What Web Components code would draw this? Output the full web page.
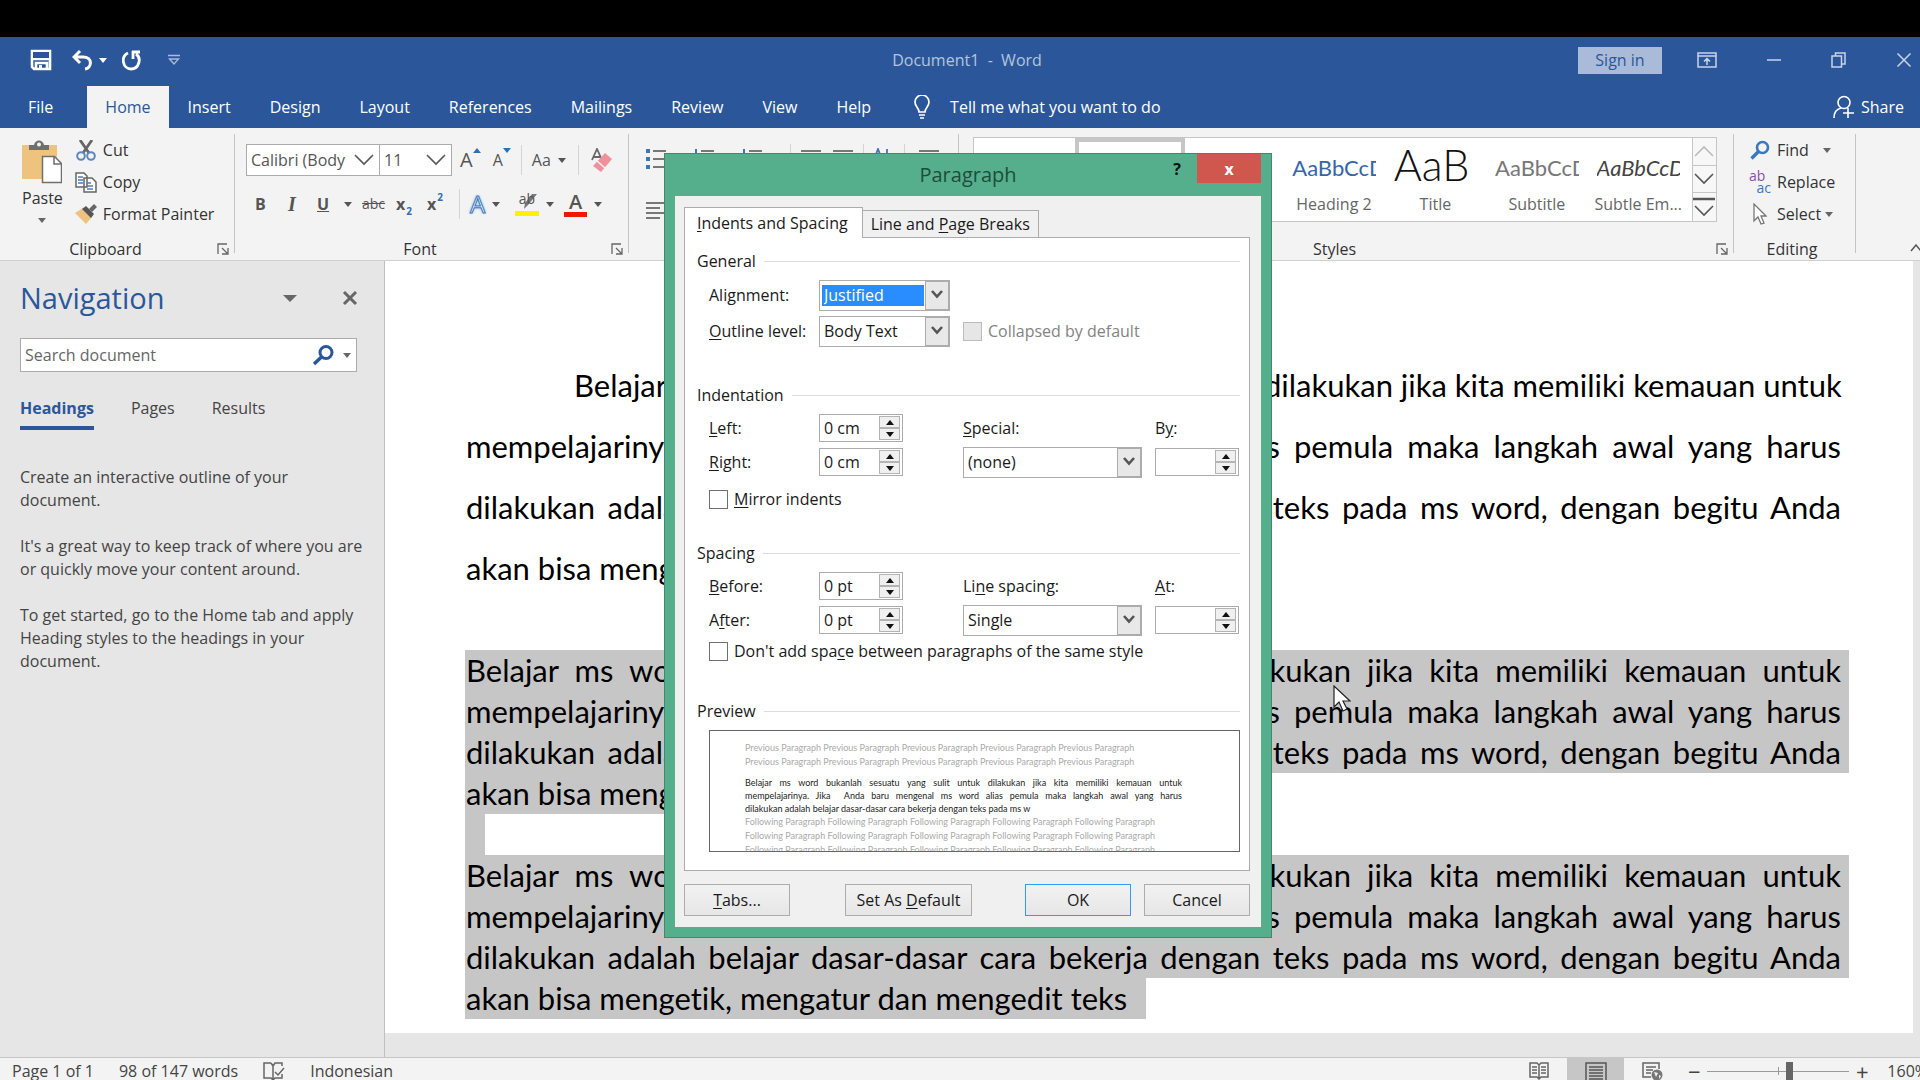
<!DOCTYPE html>
<html lang="en">
<head>
<meta charset="utf-8">
<title>Document1 - Word</title>
<style>
    html, body {
        height: 100%;
        margin: 0;
    }
    body {
        overflow: hidden;
        background: #000;
        color: #444;
        font: 16px/24px "Open Sans", "Noto Sans", sans-serif;
    }
</style>
</head>
<body>
<word-app></word-app>
<script>
const base = `
    *, :host { box-sizing: border-box; }
    button, input, select {
        margin: 0;
        padding: 0;
        border: 0;
        background: none;
        color: inherit;
        font: inherit;
        outline: none;
    }
    button { display: inline-flex; align-items: center; justify-content: center; }
`;

const icons = {
    save: [22, 22, '<path d="M2 2h18v18H4l-2-2z M6 20v-6h11v6 M2 10h18" fill="none" stroke="#fff" stroke-width="2.6"/><path d="M3 3h16v6H3z" fill="#2b579a"/><path d="M9 16h3v4H9z" fill="#fff"/>'],
    undo: [22, 22, '<path d="M8 2L2 8l6 6M3 8h8c10 0 9 11 2 12" fill="none" stroke="#fff" stroke-width="3"/>'],
    redo: [20, 22, '<path d="M6 4c-8 4-5 16 3 16s11-11 5-15M10 3h8M11 2v8" fill="none" stroke="#fff" stroke-width="2.800"/>'],
    custom: [12, 12, '<path d="M0 1.500h12M1.500 5L6 10l4.500-5z" fill="none" stroke="#a9bbd9" stroke-width="1.300"/>'],
    display: [20, 16, '<path d="M1 1h18v14H1zM1 4h18M10 13V7M7 9.500L10 6.500l3 3" fill="none" stroke="#c8d4e8" stroke-width="1.500"/>'],
    minimise: [16, 16, '<path d="M1 8h14" stroke="#c8d4e8" stroke-width="1.500"/>'],
    restore: [16, 16, '<path d="M1 4h9.500v11H1zM4.500 4V1H14v11h-3" fill="none" stroke="#c8d4e8" stroke-width="1.500"/>'],
    closewin: [16, 16, '<path d="M1.500 1.500l13 13M14.500 1.500l-13 13" stroke="#c8d4e8" stroke-width="1.500"/>'],
    bulb: [18, 24, '<path d="M6 17c0-4-4-5-4-10a7 7 0 0 1 14 0c0 5-4 6-4 10zM6 20h6M7 23h4" fill="none" stroke="#fff" stroke-width="1.700"/>'],
    share: [22, 24, '<circle cx="11" cy="7.500" r="6" fill="none" stroke="#fff" stroke-width="1.600"/><path d="M1 23c0-6 3-9 7-10M15 13v10M10 18h11" fill="none" stroke="#fff" stroke-width="1.600"/>'],
    paste: [40, 44, '<path d="M0 5h35v34H0z" fill="#eec37f"/><path d="M7 5h5c1-6 9-6 10 0h5v5H7z" fill="#6f6f6f"/><circle cx="17" cy="4.500" r="2" fill="#f3f3f3"/><path d="M20.500 16.500h12l7 7v19h-19z" fill="#fff" stroke="#6f6f6f" stroke-width="1.500"/><path d="M32 17v7h7" fill="none" stroke="#6f6f6f" stroke-width="1.500"/>'],
    cut: [20, 21, '<path d="M4 0l9 13M16 0L7 13" stroke="#666" stroke-width="2.800"/><circle cx="5" cy="16" r="3.800" fill="none" stroke="#5c86bd" stroke-width="2"/><circle cx="15" cy="16" r="3.800" fill="none" stroke="#5c86bd" stroke-width="2"/>'],
    copy: [22, 21, '<path d="M1 1h8l3 3v11H1zM9 6h8l4 4v10H9z" fill="#fff" stroke="#666" stroke-width="1.500"/><path d="M3 5h5M3 8h5M3 11h5M12 11h4M12 14h6M12 17h6" stroke="#4a7ebb" stroke-width="1.300"/>'],
    painter: [22, 20, '<path d="M8 4l9 9-6 7-11-11z" fill="#eec37f"/><path d="M7 5l4-3 8 8-3 4z" fill="#555"/><path d="M14 5l5-5 3 3-5 5z" fill="#666"/>'],
    launcher: [12, 12, '<path d="M1 11V1h9M5 5l6 6M11 5v6H5" fill="none" stroke="#666" stroke-width="1.300"/>'],
    caret: [8, 5, '<path d="M0 0h8L4 5z" fill="currentColor"/>'],
    bigcaret: [14, 7, '<path d="M0 0h14L7 7z" fill="#666"/>'],
    chevron: [20, 12, '<path d="M1 1l9 9 9-9" fill="none" stroke="#555" stroke-width="1.600"/>'],
    chevronup: [20, 12, '<path d="M1 11l9-9 9 9" fill="none" stroke="#bbb" stroke-width="1.600"/>'],
    chevronmore: [22, 20, '<path d="M0 2h22" stroke="#555" stroke-width="2.500"/><path d="M2 9l9 9 9-9" fill="none" stroke="#555" stroke-width="1.600"/>'],
    collapse: [12, 8, '<path d="M1 7l5-6 5 6" fill="none" stroke="#555" stroke-width="1.500"/>'],
    up: [8, 5, '<path d="M0 5h8L4 0z" fill="#2f6fb5"/>'],
    down: [8, 5, '<path d="M0 0h8L4 5z" fill="#2f6fb5"/>'],
    eraser: [22, 24, '<path d="M1 12L6 1l5 11M3 9h6" fill="none" stroke="#666" stroke-width="1.800"/><path d="M14 5l7 6-11 13-8-6z" fill="#f0909c"/><path d="M6 13l8 7" stroke="#f3f3f3" stroke-width="1.500"/>'],
    marker: [24, 24, '<path d="M0 19h24v5H0z" fill="#fff000"/><path d="M22 2L13 13l-4 4 1-6 7-9z" fill="#777"/>'],
    bullets: [20, 22, '<path d="M7 3h13M7 11h13M7 19h13" stroke="#777" stroke-width="2"/><path d="M0 1h4v4H0zM0 9h4v4H0zM0 17h4v4H0z" fill="#3b76b8"/>'],
    numbers: [20, 22, '<path d="M7 3h13M7 11h13M7 19h13" stroke="#777" stroke-width="2"/><path d="M2 1v5M2 9v5" stroke="#3b76b8" stroke-width="2"/>'],
    lines: [20, 22, '<path d="M0 3h20M0 8h14M0 13h20M0 18h14" stroke="#777" stroke-width="1.800"/>'],
    sort: [16, 22, '<path d="M1 9l3-8 3 8M13 1v19" fill="none" stroke="#3b76b8" stroke-width="1.800"/>'],
    find: [20, 20, '<circle cx="12.500" cy="7.500" r="5.500" fill="none" stroke="#3a78bd" stroke-width="2.600"/><path d="M8.500 11.500L1.500 18.500" stroke="#3a78bd" stroke-width="3.400"/>'],
    pointer: [14, 22, '<path d="M1 1v17l4-4 3 7 3-1-3-7h5z" fill="#fff" stroke="#777" stroke-width="1.300"/>'],
    cursor: [18, 28, '<path d="M1 1v21l5-5 4 9 4-2-4-8h7z" fill="#fff" stroke="#222" stroke-width="1.200"/>'],
    cross: [16, 16, '<path d="M2 2l12 12M14 2L2 14" stroke="#666" stroke-width="3"/>'],
    search: [22, 20, '<circle cx="14" cy="7.500" r="6" fill="none" stroke="#2b579a" stroke-width="3"/><path d="M9.500 12L2 19" stroke="#2b579a" stroke-width="3.500"/>'],
    dropdown: [12, 10, '<path d="M1 1l5 5.500L11 1" fill="none" stroke="#555" stroke-width="2.600"/>'],
    spinup: [8, 5, '<path d="M0 5h8L4 0z" fill="#111"/>'],
    spindown: [8, 5, '<path d="M0 0h8L4 5z" fill="#111"/>'],
    proof: [22, 19, '<path d="M8 1H1v15h7l2 2 2-2h7v-4M10 4v13M10 4L8 1M10 4l2-3h7v3M12 10l3 3 6-7" fill="none" stroke="#666" stroke-width="1.500"/>'],
    read: [20, 19, '<path d="M1 1h7l2 2 2-2h7v14h-7l-2 2-2-2H1zM10 3v16" fill="none" stroke="#666" stroke-width="1.500"/><path d="M3 5h5M3 8h5M3 11h5M12 5h5M12 8h5M12 11h5" stroke="#666" stroke-width="1.300"/>'],
    print: [22, 19, '<path d="M1 1h20v18H1z" fill="none" stroke="#555" stroke-width="1.500"/><path d="M4 5h14M4 8h14M4 11h14M4 14h14M4 17h14" stroke="#555" stroke-width="1.300"/>'],
    web: [22, 19, '<path d="M9 15H1V1h16v6" fill="none" stroke="#666" stroke-width="1.500"/><path d="M4 5h10M4 8h7M4 11h5" stroke="#666" stroke-width="1.300"/><circle cx="15" cy="13" r="5.500" fill="#777"/><path d="M12 10l4 1-2 4zM17 13l2 1-2 3z" fill="#f3f3f3"/>'],
};

window.customElements.define('word-icon', class WordIcon extends HTMLElement {
    constructor() {
        super();
        this.attachShadow({ mode: 'open' });
    }
    connectedCallback() {
        const [w, h, body] = icons[this.getAttribute('name')];
        this.shadowRoot.innerHTML = `
            <style>:host { display: inline-flex; flex: none; } svg { display: block; }</style>
            <svg width="${w}" height="${h}" viewBox="0 0 ${w} ${h}" aria-hidden="true">${body}</svg>
        `;
    }
});

window.customElements.define('title-bar', class TitleBar extends HTMLElement {
    static #style = `
        ${base}
        :host {
            display: grid;
            grid-template-columns: 1fr auto 1fr;
            align-items: center;
            height: 46px;
            padding-left: 14px;
            background: #2b579a;
            color: #b4c4df;
        }
        .quick, .window { display: flex; align-items: center; }
        .quick { padding-left: 16px; color: #fff; }
        .undo { gap: 5px; margin: 0 15px 0 20px; }
        .custom { margin-left: 26px; }
        .window { justify-content: flex-end; gap: 49px; padding-right: 8px; }
        .sign { width: 84px; height: 27px; margin-right: -14px; background: #a9bbd9; color: #2b579a; }
        h1 { margin: 0; font-size: 16px; font-weight: 400; white-space: pre; }
    `
    constructor() {
        super();
        this.attachShadow({ mode: 'open' });
        this.shadowRoot.innerHTML = `
            <style>${TitleBar.#style}</style>
            <div class="quick">
                <button aria-label="Save"><word-icon name="save"></word-icon></button>
                <button class="undo" aria-label="Undo"><word-icon name="undo"></word-icon><word-icon name="caret"></word-icon></button>
                <button aria-label="Repeat"><word-icon name="redo"></word-icon></button>
                <button class="custom" aria-label="Customize"><word-icon name="custom"></word-icon></button>
            </div>
            <h1>Document1  -  Word</h1>
            <div class="window">
                <button class="sign">Sign in</button>
                <button aria-label="Ribbon options"><word-icon name="display"></word-icon></button>
                <button aria-label="Minimize"><word-icon name="minimise"></word-icon></button>
                <button aria-label="Restore"><word-icon name="restore"></word-icon></button>
                <button aria-label="Close"><word-icon name="closewin"></word-icon></button>
            </div>
        `;
    }
});

window.customElements.define('tab-bar', class TabBar extends HTMLElement {
    static #style = `
        ${base}
        :host {
            display: flex;
            height: 45px;
            padding-top: 3px;
            background: #2b579a;
            color: #fff;
        }
        button { padding: 0 20px 0 19px; }
        .file { padding: 0 34px 0 28px; }
        .active { padding: 0 18px; background: #f3f3f3; color: #2b579a; }
        .tell { gap: 19px; padding-left: 22px; }
        .share { gap: 6px; margin-left: auto; padding-right: 16px; }
    `
    static #tabs = ['Insert', 'Design', 'Layout', 'References', 'Mailings', 'Review', 'View', 'Help']
    constructor() {
        super();
        this.attachShadow({ mode: 'open' });
        this.shadowRoot.innerHTML = `
            <style>${TabBar.#style}</style>
            <button class="file">File</button>
            <button class="active">Home</button>
            ${TabBar.#tabs.map((tab) => `<button>${tab}</button>`).join('')}
            <button class="tell"><word-icon name="bulb"></word-icon>Tell me what you want to do</button>
            <button class="share"><word-icon name="share"></word-icon>Share</button>
        `;
    }
});

window.customElements.define('ribbon-group', class RibbonGroup extends HTMLElement {
    static #style = `
        ${base}
        :host {
            display: flex;
            flex-direction: column;
            flex: none;
            height: 119px;
            border-right: 1px solid #c4c4c4;
        }
        .body { flex: 1; min-height: 0; }
        footer { display: flex; align-items: center; height: 24px; margin-bottom: -8px; padding-right: 5px; }
        span { flex: 1; padding-right: 6px; text-align: center; }
        :host([label=Editing]) span { padding-right: 0; }
    `
    constructor() {
        super();
        const label = this.getAttribute('label');
        const launcher = this.hasAttribute('launcher')
            ? `<button aria-label="${label} settings"><word-icon name="launcher"></word-icon></button>`
            : '';
        this.attachShadow({ mode: 'open' });
        this.shadowRoot.innerHTML = `
            <style>${RibbonGroup.#style}</style>
            <div class="body"><slot></slot></div>
            <footer><span>${label}</span>${launcher}</footer>
        `;
    }
});

window.customElements.define('style-item', class StyleItem extends HTMLElement {
    static #style = `
        ${base}
        :host { display: flex; flex: 1; min-width: 0; }
        :host([selected]) { border: 4px solid #c6c6c6; }
        button { flex: 1; min-width: 0; flex-direction: column; padding: 0 12px 0 6px; }
        b {
            width: 100%;
            height: 48px;
            overflow: hidden;
            color: var(--sample, #444);
            font: 400 var(--sample-size, 22px)/48px Lato, sans-serif;
            text-align: left;
            white-space: nowrap;
        }
        :host([italic]) b { font-style: italic; }
        :host([light]) b { font-weight: 300; line-height: 42px; }
        span { white-space: nowrap; color: #666; }
    `
    constructor() {
        super();
        this.attachShadow({ mode: 'open' });
        this.shadowRoot.innerHTML = `
            <style>${StyleItem.#style}</style>
            <button><b>${this.getAttribute('sample') || ''}</b><span><slot></slot></span></button>
        `;
    }
});

window.customElements.define('ribbon-bar', class RibbonBar extends HTMLElement {
    static #style = `
        ${base}
        :host {
            display: flex;
            height: 133px;
            padding-top: 6px;
            border-bottom: 1px solid #d0d0d0;
            background: #f3f3f3;
            color: #333;
        }
        .row { display: flex; align-items: center; }
        .col { display: flex; flex-direction: column; }
        .clipboard { width: 235px; }
        .font { width: 394px; }
        .paragraph { width: 330px; }
        .styles { flex: 1; }
        .editing { width: 122px; }
        .clip { gap: 12px; align-items: flex-start; padding: 0 0 0 22px; }
        .paste { flex-direction: column; gap: 2px; padding-top: 6px; }
        .paste word-icon[name=caret] { margin-top: 6px; color: #666; }
        .actions { align-items: flex-start; }
        .actions button { gap: 6px; height: 32px; }
        .actions word-icon { width: 22px; justify-content: center; }
        .fontrows { gap: 12px; padding: 10px 0 0 11px; }
        .fontrows .row { height: 32px; color: #555; }
        .combo { display: flex; align-items: center; height: 32px; border: 1px solid #ababab; background: #fff; padding: 0 5px 0 4px; }
        .combo select { appearance: none; flex: 1; min-width: 0; }
        .family { width: 134px; }
        .size { width: 73px; margin-left: -1px; }
        .sep { width: 1px; height: 30px; background: #d4d4d4; }
        .letter { align-items: flex-start; }
        .grow { margin-left: 8px; font-size: 20px; }
        .shrink { margin-left: 12px; }
        .case { gap: 7px; }
        .fontrows .tools { display: grid; grid-template-columns: 33px 29px 27px 18px 34px 31px 32px 11px 45px 49px 40px; padding-left: 9px; }
        .tools button { justify-content: flex-start; gap: 7px; white-space: nowrap; color: #555; }
        .serif { font-family: "Liberation Serif", serif; font-size: 20px; font-style: italic; font-weight: 700; }
        .strike { font-size: 14px; }
        sub, sup { font-size: 10px; line-height: 10px; color: #2f6fb5; }
        sub { align-self: flex-end; }
        sup { align-self: flex-start; }
        .tools .tight { gap: 1px; font-weight: 700; }
        .effect { font-size: 24px; color: #fff; -webkit-text-stroke: 1px #3b76b8; text-shadow: 0 0 3px #5b9bd5; }
        .mark { display: grid; }
        .mark > * { grid-area: 1 / 1; }
        .mark span { font-size: 14px; line-height: 14px; }
        .colour { border-bottom: 5px solid #f21800; padding: 0 5px; font-size: 20px; line-height: 20px; font-weight: 600; }
        .para { padding: 10px 0 0 17px; gap: 26px; }
        .para .row { gap: 28px; }
        .para .row .near { gap: 12px; margin-left: -18px; }
        .para .row .end { gap: 14px; margin-left: -18px; }
        .gallery { display: flex; height: 85px; margin: 3px 16px 0 14px; border: 1px solid #c6c6c6; background: #fff; }
        .gallery .scroll { width: 24px; border-left: 1px solid #c6c6c6; }
        .scroll button { height: 28px; border-bottom: 1px solid #c6c6c6; background: #f7f7f7; }
        .scroll button:last-child { border-bottom: 0; }
        .edits { padding-left: 15px; align-items: flex-start; }
        .edits button { gap: 6px; height: 32px; }
        .edits button > word-icon:first-child { width: 22px; justify-content: center; }
        .edits button .caret { color: #666; margin-left: 8px; }
        .edits button .close { color: #666; margin-left: -2px; }
        .swap { display: grid; width: 22px; font-size: 14px; line-height: 12px; color: #8a4fa8; text-align: left; }
        .swap i { font-style: normal; color: #3a78bd; text-align: right; }
        .collapse { align-self: flex-end; margin: 0 -2px 8px auto; }
        .rest { display: flex; width: 64px; }
    `
    constructor() {
        super();
        this.attachShadow({ mode: 'open' });
        this.shadowRoot.innerHTML = `
            <style>${RibbonBar.#style}</style>
            <ribbon-group class="clipboard" label="Clipboard" launcher>
                <div class="row clip">
                    <button class="paste"><word-icon name="paste"></word-icon>Paste<word-icon name="caret"></word-icon></button>
                    <div class="col actions">
                        <button><word-icon name="cut"></word-icon>Cut</button>
                        <button><word-icon name="copy"></word-icon>Copy</button>
                        <button><word-icon name="painter"></word-icon>Format Painter</button>
                    </div>
                </div>
            </ribbon-group>
            <ribbon-group class="font" label="Font" launcher>
                <div class="col fontrows">
                    <div class="row">
                        <label class="combo family"><select aria-label="Font"><option>Calibri (Body</option></select><word-icon name="chevron"></word-icon></label>
                        <label class="combo size"><select aria-label="Font size"><option>11</option></select><word-icon name="chevron"></word-icon></label>
                        <button class="letter grow">A<word-icon name="up"></word-icon></button>
                        <button class="letter shrink">A<word-icon name="down"></word-icon></button>
                        <i class="sep" style="margin: 0 10px"></i>
                        <button class="case">Aa<word-icon name="caret"></word-icon></button>
                        <i class="sep" style="margin: 0 12px"></i>
                        <button aria-label="Clear formatting"><word-icon name="eraser"></word-icon></button>
                    </div>
                    <div class="row tools">
                        <button><b>B</b></button>
                        <button class="serif">I</button>
                        <button><b><u>U</u></b></button>
                        <button aria-label="Underline style"><word-icon name="caret"></word-icon></button>
                        <button class="strike"><s>abc</s></button>
                        <button class="tight">x<sub>2</sub></button>
                        <button class="tight">x<sup>2</sup></button>
                        <i class="sep"></i>
                        <button><span class="effect">A</span><word-icon name="caret"></word-icon></button>
                        <button><span class="mark"><word-icon name="marker"></word-icon><span>ab</span></span><word-icon name="caret"></word-icon></button>
                        <button><span class="colour">A</span><word-icon name="caret"></word-icon></button>
                    </div>
                </div>
            </ribbon-group>
            <ribbon-group class="paragraph" label="">
                <div class="col para">
                    <div class="row">
                        <word-icon name="bullets"></word-icon>
                        <word-icon name="numbers"></word-icon>
                        <word-icon name="numbers"></word-icon>
                        <i class="sep"></i>
                        <div class="row near"><word-icon name="lines"></word-icon><word-icon name="lines"></word-icon></div>
                        <i class="sep" style="margin-left: -18px"></i>
                        <div class="row end"><word-icon name="sort"></word-icon><i class="sep"></i><word-icon name="lines"></word-icon></div>
                    </div>
                    <word-icon name="lines"></word-icon>
                </div>
            </ribbon-group>
            <ribbon-group class="styles" label="Styles" launcher>
                <div class="gallery">
                    <style-item></style-item>
                    <style-item selected></style-item>
                    <style-item></style-item>
                    <style-item sample="AaBbCcD" style="--sample: #3566a8">Heading 2</style-item>
                    <style-item sample="AaB" light style="--sample: #111; --sample-size: 43px">Title</style-item>
                    <style-item sample="AaBbCcD" style="--sample: #777">Subtitle</style-item>
                    <style-item sample="AaBbCcDc" italic>Subtle Em...</style-item>
                    <div class="col scroll">
                        <button aria-label="Previous row"><word-icon name="chevronup"></word-icon></button>
                        <button aria-label="Next row"><word-icon name="chevron"></word-icon></button>
                        <button aria-label="More styles"><word-icon name="chevronmore"></word-icon></button>
                    </div>
                </div>
            </ribbon-group>
            <ribbon-group class="editing" label="Editing">
                <div class="col edits">
                    <button><word-icon name="find"></word-icon>Find<word-icon class="caret" name="caret"></word-icon></button>
                    <button><span class="swap">ab<i>ac</i></span>Replace</button>
                    <button><word-icon name="pointer"></word-icon>Select<word-icon class="close" name="caret"></word-icon></button>
                </div>
            </ribbon-group>
            <div class="rest"><button class="collapse" aria-label="Collapse the ribbon"><word-icon name="collapse"></word-icon></button></div>
        `;
    }
});

window.customElements.define('nav-pane', class NavPane extends HTMLElement {
    static #style = `
        ${base}
        :host {
            display: block;
            flex: none;
            width: 385px;
            padding: 15px 20px 0;
            border-right: 1px solid #c0c0c0;
            background: #e6e6e6;
            line-height: 23px;
        }
        header { display: flex; align-items: center; padding-right: 6px; }
        h2 { flex: 1; margin: 0; color: #2b579a; font-size: 29px; font-weight: 400; line-height: 44px; }
        header button + button { margin-left: 45px; }
        form { display: flex; align-items: center; height: 34px; margin: 18px 7px 0 0; padding: 0 5px 0 4px; border: 1px solid #ababab; background: #fff; }
        input { flex: 1; min-width: 0; }
        input::placeholder { color: #666; opacity: 1; }
        form button + button { margin-left: 9px; color: #666; }
        nav { display: flex; gap: 37px; margin-top: 18px; }
        nav button { height: 40px; border-bottom: 4px solid transparent; }
        nav .active { border-color: #2b579a; color: #2b579a; font-weight: 700; }
        .help { margin-top: 36px; margin-right: -18px; }
        p { margin: 0 0 23px; }
    `
    constructor() {
        super();
        this.attachShadow({ mode: 'open' });
        this.shadowRoot.innerHTML = `
            <style>${NavPane.#style}</style>
            <header>
                <h2>Navigation</h2>
                <button aria-label="Pane options"><word-icon name="bigcaret"></word-icon></button>
                <button aria-label="Close pane"><word-icon name="cross"></word-icon></button>
            </header>
            <form>
                <input type="text" placeholder="Search document" aria-label="Search document">
                <button type="button" aria-label="Search"><word-icon name="search"></word-icon></button>
                <button type="button" aria-label="Search options"><word-icon name="caret"></word-icon></button>
            </form>
            <nav>
                <button class="active">Headings</button>
                <button>Pages</button>
                <button>Results</button>
            </nav>
            <div class="help">
                <p>Create an interactive outline of your<br>document.</p>
                <p>It's a great way to keep track of where you are<br>or quickly move your content around.</p>
                <p>To get started, go to the Home tab and apply<br>Heading styles to the headings in your<br>document.</p>
            </div>
        `;
    }
});

window.customElements.define('doc-page', class DocPage extends HTMLElement {
    static #style = `
        ${base}
        :host {
            display: block;
            flex: 1;
            min-width: 0;
            padding: 0 7px 24px 0;
            background: #e6e6e6;
        }
        .page {
            height: 100%;
            padding: 94px 64px 0 80px;
            background: #fff;
            color: #000;
            font: 31px/41px Lato, "Open Sans", sans-serif;
            font-variant-ligatures: none;
        }
        p { margin: 0; }
        .first { margin-bottom: 51px; padding: 0 8px 0 1px; line-height: 61px; }
        .line { display: block; text-align: justify; text-align-last: justify; white-space: nowrap; }
        .indent { padding-left: 108px; }
        .end { text-align-last: left; }
        .picked .line { padding: 0 8px 0 1px; background: #c6c6c6; }
        .picked .end { width: fit-content; padding-right: 19px; }
        .mark { width: 20px; height: 41px; background: #c6c6c6; }
    `
    static #lines = [
        'Belajar ms word bukanlah sesuatu yang sulit untuk dilakukan jika kita memiliki kemauan untuk',
        'mempelajarinya. Jika &nbsp;Anda baru mengenal ms word alias pemula maka langkah awal yang harus',
        'dilakukan adalah belajar dasar-dasar cara bekerja dengan teks pada ms word, dengan begitu Anda',
        'akan bisa mengetik, mengatur dan mengedit teks',
    ]
    static #paragraph(kind) {
        const names = [kind === 'first' ? 'line indent' : 'line', 'line', 'line', 'line end'];
        return `<p class="${kind}">${DocPage.#lines.map((line, i) => `<span class="${names[i]}">${line}</span>`).join('')}</p>`;
    }
    constructor() {
        super();
        this.attachShadow({ mode: 'open' });
        this.shadowRoot.innerHTML = `
            <style>${DocPage.#style}</style>
            <article class="page">
                ${DocPage.#paragraph('first')}
                ${DocPage.#paragraph('picked')}
                <div class="mark"></div>
                ${DocPage.#paragraph('picked')}
            </article>
        `;
    }
});

window.customElements.define('status-bar', class StatusBar extends HTMLElement {
    static #style = `
        ${base}
        :host {
            display: flex;
            align-items: center;
            height: 23px;
            overflow: hidden;
            padding: 4px 0 0 12px;
            border-top: 1px solid #c6c6c6;
            background: #f3f3f3;
            line-height: 24px;
            white-space: nowrap;
        }
        .left, .right { display: flex; align-items: center; }
        .left { gap: 25px; }
        .right { margin-left: auto; margin-right: -8px; }
        .view { width: 57px; height: 28px; }
        .on { background: #c6c6c6; }
        .step { width: 14px; font-size: 22px; }
        .view + .step { margin-left: 6px; }
        input { appearance: none; width: 142px; height: 16px; margin: 0 6px; background: linear-gradient(#999, #999) center / 100% 1px no-repeat, linear-gradient(#999, #999) center / 1px 8px no-repeat; }
        input::-webkit-slider-thumb { appearance: none; width: 7px; height: 18px; background: #666; }
        .zoom { margin-left: 18px; }
    `
    constructor() {
        super();
        this.attachShadow({ mode: 'open' });
        this.shadowRoot.innerHTML = `
            <style>${StatusBar.#style}</style>
            <div class="left">
                <span>Page 1 of 1</span>
                <span>98 of 147 words</span>
                <word-icon name="proof"></word-icon>
                <span>Indonesian</span>
            </div>
            <div class="right">
                <button class="view" aria-label="Read mode"><word-icon name="read"></word-icon></button>
                <button class="view on" aria-label="Print layout"><word-icon name="print"></word-icon></button>
                <button class="view" aria-label="Web layout"><word-icon name="web"></word-icon></button>
                <button class="step" aria-label="Zoom out">−</button>
                <input type="range" value="58" aria-label="Zoom">
                <button class="step" aria-label="Zoom in">+</button>
                <span class="zoom">160%</span>
            </div>
        `;
    }
});

window.customElements.define('dialog-section', class DialogSection extends HTMLElement {
    static #style = `
        ${base}
        :host { display: block; }
        h3 { display: flex; align-items: center; gap: 8px; height: 24px; margin: 0 0 4px; font-size: 16px; font-weight: 400; }
        h3:after { content: ""; flex: 1; height: 1px; background: #dcdcdc; }
        .grid { display: grid; grid-template-columns: 110px 144px 192px 1fr; grid-auto-rows: var(--row, 34px); align-items: center; padding-left: 12px; }
    `
    constructor() {
        super();
        this.attachShadow({ mode: 'open' });
        this.shadowRoot.innerHTML = `
            <style>${DialogSection.#style}</style>
            <h3>${this.getAttribute('heading')}</h3>
            <div class="grid"><slot></slot></div>
            <slot name="extra"></slot>
        `;
    }
});

window.customElements.define('check-field', class CheckField extends HTMLElement {
    static #style = `
        ${base}
        :host { display: block; }
        :host([disabled]) { color: #838383; }
        label { display: flex; align-items: center; gap: 6px; height: 24px; white-space: nowrap; }
        input { appearance: none; width: 19px; height: 19px; border: 1px solid #707070; background: #fff; }
        input:disabled { border-color: #bcbcbc; background: #e6e6e6; }
    `
    constructor() {
        super();
        this.attachShadow({ mode: 'open' });
        this.shadowRoot.innerHTML = `
            <style>${CheckField.#style}</style>
            <label><input type="checkbox" ${this.hasAttribute('disabled') ? 'disabled' : ''}><span><slot></slot></span></label>
        `;
    }
});

window.customElements.define('paragraph-dialog', class ParagraphDialog extends HTMLElement {
    static #style = `
        ${base}
        :host {
            position: absolute;
            left: 664px;
            top: 153px;
            width: 608px;
            padding: 0 10px 10px;
            border: 1px solid #3f8a6c;
            background: #55af8c;
            color: #1a1a1a;
            line-height: 20px;
        }
        header { display: grid; grid-template-columns: 1fr auto 1fr; height: 42px; }
        h2 { margin: 0; color: #1d4d3a; font-size: 20px; font-weight: 400; line-height: 42px; }
        .controls { display: flex; justify-content: flex-end; align-items: flex-start; }
        .controls button { width: 40px; height: 29px; color: #111; font-weight: 700; }
        .controls .close { width: 64px; background: #d0574e; color: #fff; }
        .body { padding: 11px 11px 11px 9px; background: #f0f0f0; }
        .tabs { display: flex; align-items: flex-end; height: 30px; }
        .tabs button { height: 27px; padding: 0 8px; border: 1px solid #acacac; border-left: 0; border-bottom: 0; background: #f0f0f0; white-space: nowrap; }
        .tabs .active { position: relative; height: 31px; margin-bottom: -1px; padding: 0 14px 0 12px; border-left: 1px solid #acacac; background: #fff; }
        .panel { padding: 11px 9px 18px 12px; border: 1px solid #acacac; background: #fff; }
        u { text-underline-offset: 2px; }
        .select, .spin { display: flex; border: 1px solid #acacac; background: #fff; }
        .select { width: 131px; height: 31px; }
        .wide { width: 179px; }
        .select select { appearance: none; flex: 1; min-width: 0; height: 21px; margin: 4px 1px 0 2px; padding-left: 2px; color: #1a1a1a; }
        .select .focus { background: #2a8dff; color: #fff; }
        .drop { display: flex; width: 24px; align-items: center; justify-content: center; border: 1px solid #acacac; background: #e8e8e8; }
        .spin { width: 84px; height: 28px; }
        .spin input { flex: 1; min-width: 0; padding-left: 4px; }
        .arrows { display: flex; flex-direction: column; width: 21px; margin: 1px 2px; }
        .arrows button { flex: 1; border: 1px solid #b4b4b4; background: #f0f0f0; }
        .span { grid-column: 3 / 5; }
        .preview { height: 122px; margin: 3px 0 0 12px; padding: 10px 57px 0 35px; overflow: hidden; border: 1px solid #666; color: #222; font: 9px/13px Lato, "Open Sans", sans-serif; white-space: nowrap; }
        .preview p { margin: 0; }
        .preview .faint { color: #aaa; line-height: 14px; }
        .just { text-align-last: justify; }
        .preview .sample { margin: 7px 0 0; }
        footer { display: flex; margin-top: 13px; }
        footer button { width: 106px; height: 32px; border: 1px solid #acacac; background: linear-gradient(#f2f2f2, #e6e6e6); }
        footer .default { width: 127px; margin-left: 55px; }
        footer .ok { margin-left: auto; border-color: #3399ff; }
        footer .cancel { margin-left: 13px; }
        .general { --row: 36px; }
    `
    static #select(id, value, kind = '') {
        return `<div class="select ${kind}"><select id="${id}" class="${id === 'alignment' ? 'focus' : ''}"><option>${value}</option></select><span class="drop"><word-icon name="dropdown"></word-icon></span></div>`;
    }
    static #spin(id, value = '') {
        return `<div class="spin"><input type="text" id="${id}" value="${value}"><span class="arrows"><button aria-label="Increase"><word-icon name="spinup"></word-icon></button><button aria-label="Decrease"><word-icon name="spindown"></word-icon></button></span></div>`;
    }
    constructor() {
        super();
        const select = ParagraphDialog.#select;
        const spin = ParagraphDialog.#spin;
        const previous = `<p class="faint">${Array(5).fill('Previous Paragraph').join(' ')}</p>`;
        const following = `<p class="faint">${Array(5).fill('Following Paragraph').join(' ')}</p>`;
        this.attachShadow({ mode: 'open' });
        this.shadowRoot.innerHTML = `
            <style>${ParagraphDialog.#style}</style>
            <header>
                <span></span>
                <h2>Paragraph</h2>
                <div class="controls"><button>?</button><button class="close">x</button></div>
            </header>
            <div class="body">
                <div class="tabs">
                    <button class="active"><span><u>I</u>ndents and Spacing</span></button>
                    <button><span>Line and <u>P</u>age Breaks</span></button>
                </div>
                <div class="panel">
                    <dialog-section class="general" heading="General">
                        <label for="alignment">Ali<u>g</u>nment:</label>${select('alignment', 'Justified')}<i class="span"></i>
                        <label for="outline"><u>O</u>utline level:</label>${select('outline', 'Body Text')}
                        <check-field class="span" disabled>Collapsed by default</check-field>
                    </dialog-section>
                    <dialog-section heading="Indentation" style="margin-top: 34px">
                        <label for="left"><u>L</u>eft:</label>${spin('left', '0 cm')}
                        <label for="special"><u>S</u>pecial:</label><label for="by">B<u>y</u>:</label>
                        <label for="right"><u>R</u>ight:</label>${spin('right', '0 cm')}
                        ${select('special', '(none)', 'wide')}${spin('by')}
                        <check-field slot="extra" style="margin: 8px 0 0 12px"><u>M</u>irror indents</check-field>
                    </dialog-section>
                    <dialog-section heading="Spacing" style="margin-top: 30px">
                        <label for="before"><u>B</u>efore:</label>${spin('before', '0 pt')}
                        <label for="spacing">Li<u>n</u>e spacing:</label><label for="at"><u>A</u>t:</label>
                        <label for="after">A<u>f</u>ter:</label>${spin('after', '0 pt')}
                        ${select('spacing', 'Single', 'wide')}${spin('at')}
                        <check-field slot="extra" style="margin: 2px 0 0 12px">Don't add spa<u>c</u>e between paragraphs of the same style</check-field>
                    </dialog-section>
                    <dialog-section heading="Preview" style="margin-top: 36px">
                        <div slot="extra" class="preview">
                            ${previous}${previous}
                            <p class="sample just">Belajar ms word bukanlah sesuatu yang sulit untuk dilakukan jika kita memiliki kemauan untuk</p>
                            <p class="just">mempelajarinya. Jika &nbsp;Anda baru mengenal ms word alias pemula maka langkah awal yang harus</p>
                            <p>dilakukan adalah belajar dasar-dasar cara bekerja dengan teks pada ms w</p>
                            ${following}${following}${following}
                        </div>
                    </dialog-section>
                </div>
                <footer>
                    <button><span><u>T</u>abs...</span></button>
                    <button class="default"><span>Set As <u>D</u>efault</span></button>
                    <button class="ok">OK</button>
                    <button class="cancel">Cancel</button>
                </footer>
            </div>
        `;
    }
});

window.customElements.define('word-app', class WordApp extends HTMLElement {
    static #style = `
        ${base}
        :host {
            display: flex;
            flex-direction: column;
            height: 100vh;
            padding-top: 37px;
        }
        main { display: flex; flex: 1; min-height: 0; background: #e6e6e6; }
        .cursor { position: absolute; left: 1333px; top: 685px; }
    `
    constructor() {
        super();
        this.attachShadow({ mode: 'open' });
        this.shadowRoot.innerHTML = `
            <style>${WordApp.#style}</style>
            <title-bar></title-bar>
            <tab-bar></tab-bar>
            <ribbon-bar></ribbon-bar>
            <main><nav-pane></nav-pane><doc-page></doc-page></main>
            <status-bar></status-bar>
            <paragraph-dialog></paragraph-dialog>
            <word-icon class="cursor" name="cursor"></word-icon>
        `;
    }
});
</script>
</body>
</html>
